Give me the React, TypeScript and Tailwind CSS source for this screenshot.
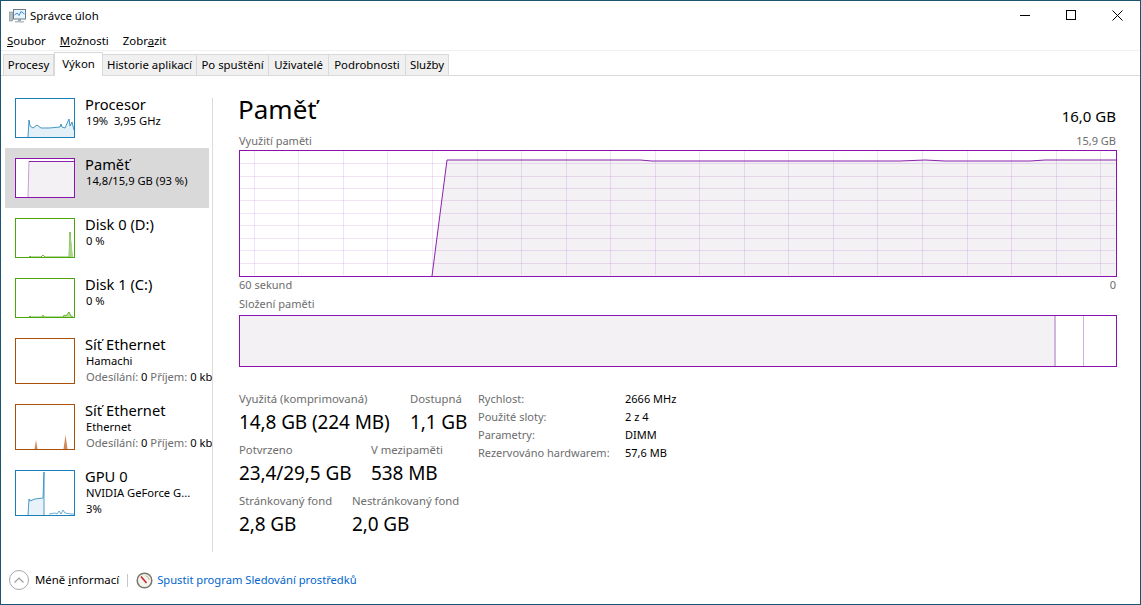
import React from "react"

const FONT = "font-['Noto_Sans','Open_Sans',sans-serif]"

const TABS = [
  { name: "Procesy", w: "w-[51px]" },
  { name: "Výkon", w: "w-[49px]", active: true },
  { name: "Historie aplikací", w: "w-[94px]" },
  { name: "Po spuštění", w: "w-[72px]" },
  { name: "Uživatelé", w: "w-[60px]" },
  { name: "Podrobnosti", w: "w-[77px]" },
  { name: "Služby", w: "w-[43px]" },
]

function Thumb({ color, fill, line, area, extra }: { color: string; fill?: string; line?: string; area?: string; extra?: React.ReactNode }) {
  return (
    <svg width="60" height="40" viewBox="0 0 60 40" className="shrink-0 block">
      <rect x="0.5" y="0.5" width="59" height="39" fill="#fff" stroke={color} />
      {area && <polygon points={area} fill={fill} />}
      {line && <polyline points={line} fill="none" stroke={color} strokeOpacity="0.8" strokeWidth="1" />}
      {extra}
    </svg>
  )
}

function SideItem({
  thumb,
  title,
  lines,
  selected,
  tall,
}: {
  thumb: React.ReactNode
  title: string
  lines: React.ReactNode[]
  selected?: boolean
  tall?: boolean
}) {
  return (
    <div
      className={`flex gap-[10px] pl-[10px] w-[204px] ml-[4px] shrink-0 ${tall ? "h-[66px] items-start" : "h-[60px] pt-[10px]"} ${
        selected ? "bg-[#d9d9d9]" : ""
      }`}
    >
      {thumb}
      <div className="min-w-0 whitespace-nowrap -mt-[3px]">
        <div className="text-[14.7px] leading-[19px] text-black -mb-[1px]">{title}</div>
        {lines.map((l, i) => (
          <div key={i} className="text-[11.2px] leading-[16px] text-black pl-[1px]">
            {l}
          </div>
        ))}
      </div>
    </div>
  )
}

function NetLine() {
  return (
    <>
      <span className="text-[#6d6d6d]">Odesílání:</span> 0 <span className="text-[#6d6d6d]">Příjem:</span> 0 kb
    </>
  )
}

function Stat({ label, value, w }: { label: string; value: string; w: string }) {
  return (
    <div className={`${w} shrink-0 whitespace-nowrap`}>
      <div className="text-[11.3px] leading-[18px] text-[#6d6d6d]">{label}</div>
      <div className="text-[19px] leading-[28px] text-black tracking-[-0.1px]">{value}</div>
    </div>
  )
}

const V_GRID = [254, 298, 343, 387, 432, 477, 521, 566, 610, 655, 699, 744, 788, 833, 877, 922, 967, 1011, 1056, 1100]
const H_GRID = [163, 176, 188, 200, 213, 225, 238, 250, 263]

function MemoryGraph() {
  const linePts =
    "432,276 447,160 640,160 652,161 900,161 925,160 945,161 1030,161 1045,160 1116,160"
  return (
    <svg width="878" height="127" viewBox="239 150 878 127" className="block">
      <rect x="239" y="150" width="878" height="127" fill="#fff" />
      <polygon points={`${linePts} 1116,276`} fill="#f3f1f4" />
      <g shapeRendering="crispEdges" stroke="#8a19ab" strokeOpacity="0.12" strokeWidth="1">
        {V_GRID.map((x) => (
          <line key={x} x1={x + 0.5} y1="151" x2={x + 0.5} y2="275" />
        ))}
        {H_GRID.map((y) => (
          <line key={y} x1="240" y1={y + 0.5} x2="1115" y2={y + 0.5} />
        ))}
      </g>
      <polyline points={linePts} fill="none" stroke="#8b22ad" strokeWidth="1" />
      <rect x="239.5" y="150.5" width="877" height="126" fill="none" stroke="#8b12ae" shapeRendering="crispEdges" />
    </svg>
  )
}

function AppIcon() {
  return (
    <svg width="17" height="16" viewBox="0 0 17 16" className="block">
      <rect x="0.5" y="4" width="3" height="9" fill="#b5bcc2" stroke="#7f8a93" strokeWidth="0.6" />
      <rect x="4.5" y="1.5" width="12" height="9.5" fill="#e8f3fb" stroke="#6d7d8a" />
      <polyline points="5.5,7 8,5 10,7.5 12,3.5 15.5,6" fill="none" stroke="#3d8fd0" strokeWidth="1" />
      <rect x="9" y="11" width="3" height="2" fill="#99a3ab" />
      <rect x="6" y="13" width="9" height="1.5" fill="#b6bec4" />
    </svg>
  )
}

function ResmonIcon() {
  return (
    <svg width="17" height="17" viewBox="0 0 17 17" className="block">
      <circle cx="8.5" cy="8.5" r="7.3" fill="#f6f3ec" stroke="#77776f" strokeWidth="1.5" />
      <line x1="5" y1="4.5" x2="10.5" y2="11" stroke="#c8202a" strokeWidth="1.5" />
      <path d="M9.5 3.7 A5 5 0 0 1 13.3 8" fill="none" stroke="#c9b9a0" strokeWidth="1" />
    </svg>
  )
}

export default function App() {
  return (
    <div className={`${FONT} w-[1141px] h-[605px] bg-white border border-[#1b5470] flex flex-col overflow-hidden antialiased`}>
      <div className="h-[30px] shrink-0 flex items-center pl-[8px]">
        <AppIcon />
        <span className="ml-[4px] text-[11.4px] text-black">Správce úloh</span>
        <div className="ml-auto flex items-center -mt-[2px]">
          <div className="w-[46px] h-[29px] flex items-center justify-center">
            <div className="w-[10px] h-px bg-black" />
          </div>
          <div className="w-[46px] h-[29px] flex items-center justify-center">
            <div className="w-[10px] h-[10px] border border-black" />
          </div>
          <div className="w-[46px] h-[29px] flex items-center justify-center">
            <svg width="11" height="11" viewBox="0 0 11 11">
              <path d="M0.5 0.5 L10.5 10.5 M10.5 0.5 L0.5 10.5" stroke="#000" strokeWidth="1" fill="none" />
            </svg>
          </div>
        </div>
      </div>

      <div className="h-[20px] shrink-0 flex items-center gap-[14px] pl-[6px] text-[11.4px] text-black border-b border-[#f0f0f0]">
        <span><u>S</u>oubor</span>
        <span><u>M</u>ožnosti</span>
        <span>Zobr<u>a</u>zit</span>
      </div>

      <div className="h-[25px] shrink-0 flex items-end pl-[2px] border-b border-[#d9d9d9]">
        {TABS.map((t) => (
          <div
            key={t.name}
            className={`${t.w} shrink-0 flex items-center justify-center text-[11.4px] whitespace-nowrap border border-[#d9d9d9] text-black ${
              t.active ? "h-[24px] bg-white border-b-0 -mb-px pb-[2px]" : "h-[21px] bg-[#f0f0f0] border-l-0 first:border-l border-b-0"
            }`}
          >
            {t.name}
          </div>
        ))}
      </div>

      <div className="flex-1 min-h-0 flex">
        <div className="w-[211px] shrink-0 flex flex-col pt-[12px] overflow-hidden">
          <SideItem
            title="Procesor"
            lines={["19%\u00a0 3,95 GHz"]}
            thumb={
              <Thumb
                color="#1a7fb8"
                fill="#e4f0f8"
                line="13,39 14,22 15,28 18,30 22,27 26,30 34,30 45,29 46,26 47,29 50,30 54,21 55,28 57,24 59,32"
                area="13,39 14,22 15,28 18,30 22,27 26,30 34,30 45,29 46,26 47,29 50,30 54,21 55,28 57,24 59,32 59,39"
              />
            }
          />
          <SideItem
            selected
            title="Paměť"
            lines={["14,8/15,9 GB (93 %)"]}
            thumb={
              <Thumb
                color="#8b12ae"
                fill="#f3f1f4"
                area="13,39 14,3 59,3 59,39"
                extra={
                  <>
                    <line x1="13" y1="39" x2="14" y2="3" stroke="#c99fdc" strokeWidth="1" />
                    <line x1="14" y1="3.5" x2="59" y2="3.5" stroke="#8b22ad" strokeWidth="1" />
                  </>
                }
              />
            }
          />
          <SideItem
            title="Disk 0 (D:)"
            lines={["0 %"]}
            thumb={
              <Thumb
                color="#4da60c"
                line="14,39 15,38 16,39 26,39 28,37 30,39 54,39 55,14 57,39"
                extra={<polygon points="54,39 55,14 58,39" fill="#a9d386" />}
              />
            }
          />
          <SideItem
            title="Disk 1 (C:)"
            lines={["0 %"]}
            thumb={
              <Thumb
                color="#4da60c"
                fill="#bcdca2"
                line="14,39 15,38 16,39 27,39 28,37 29,39 48,39 49,37 51,38 54,34 56,38 58,39"
                area="48,39 49,37 51,38 54,34 56,38 58,39"
              />
            }
          />
          <div className="h-[10px] shrink-0" />
          <SideItem
            title="Síť Ethernet"
            lines={["Hamachi", <NetLine key="n" />]}
            tall
            thumb={
              <svg width="60" height="46" viewBox="0 0 60 46" className="shrink-0 block">
                <rect x="0.5" y="0.5" width="59" height="45" fill="#fff" stroke="#a84f0a" />
              </svg>
            }
          />
          <SideItem
            title="Síť Ethernet"
            lines={["Ethernet", <NetLine key="n" />]}
            tall
            thumb={
              <svg width="60" height="46" viewBox="0 0 60 46" className="shrink-0 block">
                <rect x="0.5" y="0.5" width="59" height="45" fill="#fff" stroke="#a84f0a" />
                <polygon points="19.5,45 21,36 22.5,45" fill="#d08a5c" />
                <polygon points="48.5,45 50.5,31 52.5,45" fill="#d08a5c" />
              </svg>
            }
          />
          <SideItem
            title="GPU 0"
            lines={["NVIDIA GeForce G...", "3%"]}
            tall
            thumb={
              <svg width="60" height="46" viewBox="0 0 60 46" className="shrink-0 block">
                <rect x="0.5" y="0.5" width="59" height="45" fill="#fff" stroke="#1a7fb8" />
                <polygon points="13,45 14,29 28,28 29,2 29,45" fill="#e9f2f9" />
                <polyline points="13,45 14,29 15,31 20,29 28,28 29,2 29,45" fill="none" stroke="#2e8cc2" strokeOpacity="0.85" />
                <polyline points="34,44 40,43 42,44 44,41 46,44 48,40 50,43 56,44 59,44" fill="none" stroke="#2e8cc2" strokeOpacity="0.7" />
              </svg>
            }
          />
        </div>

        <div className="w-[1px] shrink-0 bg-[#dcdcdc] mt-[22px] h-[454px]" />

        <div className="flex-1 min-w-0 pl-[26px] pr-[24px]">
          <div className="flex items-end justify-between h-[51px]">
            <div className="text-[26px] leading-[34px] text-black -ml-[1px] mb-[1px]">Paměť</div>
            <div className="text-[15px] leading-[20px] text-black mb-[1px]">16,0 GB</div>
          </div>
          <div className="flex justify-between text-[11px] leading-[15px] text-[#6d6d6d] mt-[6px] mb-[2px]">
            <span>Využití paměti</span>
            <span>15,9 GB</span>
          </div>
          <MemoryGraph />
          <div className="flex justify-between text-[11px] leading-[15px] text-[#6d6d6d]">
            <span>60 sekund</span>
            <span>0</span>
          </div>
          <div className="text-[11px] leading-[15px] text-[#6d6d6d] mt-[4px]">Složení paměti</div>
          <div className="mt-[4px] h-[52px] w-[878px] flex border border-[#8b12ae] bg-white">
            <div className="w-[816px] bg-[#f3f1f4] border-r-2 border-[#cfb4db]" />
            <div className="w-[28px] border-r border-[#cfb4db]" />
          </div>

          <div className="flex mt-[23px]">
            <div className="w-[239px] shrink-0">
              <div className="flex">
                <Stat label="Využitá (komprimovaná)" value="14,8 GB (224 MB)" w="w-[171px]" />
                <Stat label="Dostupná" value="1,1 GB" w="w-[68px]" />
              </div>
              <div className="flex mt-[5px]">
                <Stat label="Potvrzeno" value="23,4/29,5 GB" w="w-[132px]" />
                <Stat label="V mezipaměti" value="538 MB" w="w-[100px]" />
              </div>
              <div className="flex mt-[5px]">
                <Stat label="Stránkovaný fond" value="2,8 GB" w="w-[113px]" />
                <Stat label="Nestránkovaný fond" value="2,0 GB" w="w-[120px]" />
              </div>
            </div>
            <div className="grid grid-cols-[147px_auto] auto-rows-[18px] text-[11px] leading-[18px]">
              <span className="text-[#6d6d6d]">Rychlost:</span><span className="text-black">2666 MHz</span>
              <span className="text-[#6d6d6d]">Použité sloty:</span><span className="text-black">2 z 4</span>
              <span className="text-[#6d6d6d]">Parametry:</span><span className="text-black">DIMM</span>
              <span className="text-[#6d6d6d]">Rezervováno hardwarem:</span><span className="text-black">57,6 MB</span>
            </div>
          </div>
        </div>
      </div>

      <div className="h-[46px] shrink-0 flex items-center pl-[8px] pb-[2px] text-[11.4px]">
        <div className="w-[20px] h-[20px] rounded-full border border-[#a8a8a8] flex items-center justify-center">
          <svg width="10" height="6" viewBox="0 0 10 6">
            <path d="M0.5 5.5 L5 1 L9.5 5.5" fill="none" stroke="#a0a0a0" strokeWidth="1.2" />
          </svg>
        </div>
        <span className="ml-[6px] text-black">Méně <u>i</u>nformací</span>
        <div className="ml-[8px] w-px h-[13px] bg-[#c8c8c8]" />
        <div className="ml-[8px]"><ResmonIcon /></div>
        <span className="ml-[4px] text-[11.2px] text-[#0066cc]">Spustit program Sledování prostředků</span>
      </div>
    </div>
  )
}
